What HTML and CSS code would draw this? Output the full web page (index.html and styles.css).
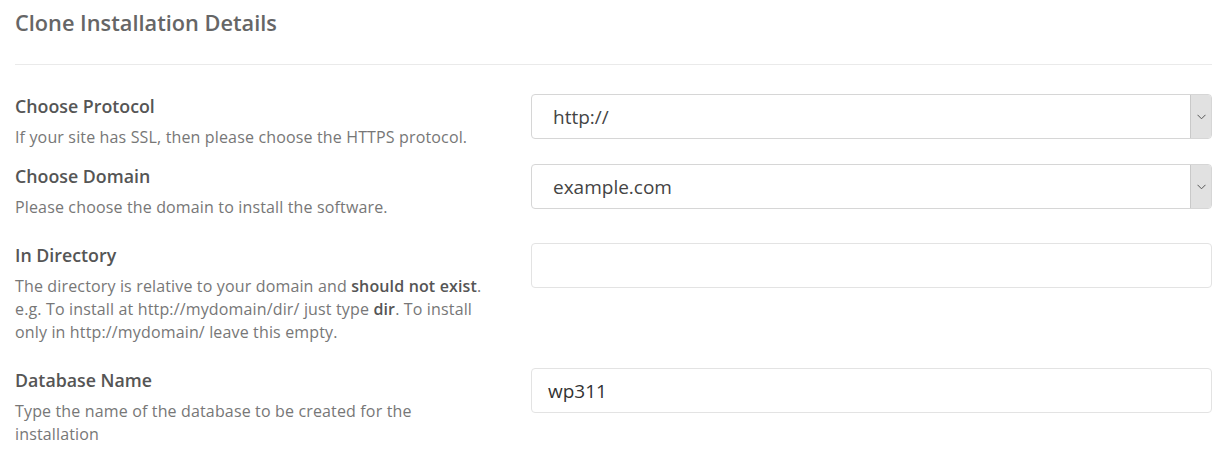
FILE: index.html
```html
<!DOCTYPE html>
<html lang="en">
<head>
<meta charset="utf-8">
<title>Clone Installation Details</title>
<link rel="stylesheet" href="styles.css">
</head>
<body>
<div class="page">
  <h2 class="title">Clone Installation Details</h2>
  <hr class="sep">

  <div class="row row-1">
    <div class="info">
      <label class="label">Choose Protocol</label>
      <p class="desc">If your site has SSL, then please choose the HTTPS protocol.</p>
    </div>
    <div class="field">
      <div class="select">
        <span class="select-value">http://</span>
        <span class="select-arrow">
          <svg width="9" height="6" viewBox="0 0 9 6"><path d="M0.5 0.8 L4.5 4.8 L8.5 0.8" fill="none" stroke="#555" stroke-width="1"/></svg>
        </span>
      </div>
    </div>
  </div>

  <div class="row">
    <div class="info">
      <label class="label">Choose Domain</label>
      <p class="desc">Please choose the domain to install the software.</p>
    </div>
    <div class="field">
      <div class="select">
        <span class="select-value">example.com</span>
        <span class="select-arrow">
          <svg width="9" height="6" viewBox="0 0 9 6"><path d="M0.5 0.8 L4.5 4.8 L8.5 0.8" fill="none" stroke="#555" stroke-width="1"/></svg>
        </span>
      </div>
    </div>
  </div>

  <div class="row">
    <div class="info">
      <label class="label">In Directory</label>
      <p class="desc">The directory is relative to your domain and <b>should not exist</b>. e.g. To install at http://mydomain/dir/ just type <b>dir</b>. To install only in http://mydomain/ leave this empty.</p>
    </div>
    <div class="field">
      <div class="input"></div>
    </div>
  </div>

  <div class="row">
    <div class="info">
      <label class="label">Database Name</label>
      <p class="desc">Type the name of the database to be created for the installation</p>
    </div>
    <div class="field">
      <div class="input"><span class="input-value">wp311</span></div>
    </div>
  </div>
</div>
</body>
</html>
```

FILE: styles.css
```css
* { box-sizing: border-box; }
html, body { margin: 0; padding: 0; background: #fff; }
body {
  font-family: "Open Sans", "Liberation Sans", sans-serif;
  color: #777;
}
.page {
  padding: 0 14px 0 15px;
}
.title {
  margin: 0;
  padding-top: 8px;
  font-size: 21.75px;
  line-height: 30px;
  font-weight: 600;
  color: #666;
}
.sep {
  border: 0;
  border-top: 1px solid #eaeaea;
  margin: 26px 0 29px;
  height: 0;
}
.row {
  display: grid;
  grid-template-columns: 475px 1fr;
  column-gap: 41px;
  margin-bottom: 24px;
}
.row-1 { margin-bottom: 15px; }
.label {
  display: block;
  font-size: 17.8px;
  line-height: 24px;
  font-weight: 600;
  color: #555;
}
.desc {
  margin: 8px 0 0;
  font-size: 16px;
  letter-spacing: 0.15px;
  line-height: 23px;
  color: #777;
}
.desc b { color: #555; font-weight: 600; }
.select, .input {
  height: 45px;
  border: 1px solid #d6d6d6;
  border-radius: 4px;
  display: flex;
  align-items: center;
  background: #fff;
  overflow: hidden;
}
.input { border-color: #e3e3e3; }
.select-value {
  flex: 1;
  padding-left: 21px;
  font-size: 19px;
  color: #444;
}
.input-value {
  padding-left: 16px;
  font-size: 19px;
  color: #333;
}
.select-arrow {
  width: 21px;
  align-self: stretch;
  background: #e1e1e1;
  border-left: 1px solid #c9c9c9;
  display: flex;
  align-items: center;
  justify-content: center;
}
.select-arrow svg { display: block; }
```
